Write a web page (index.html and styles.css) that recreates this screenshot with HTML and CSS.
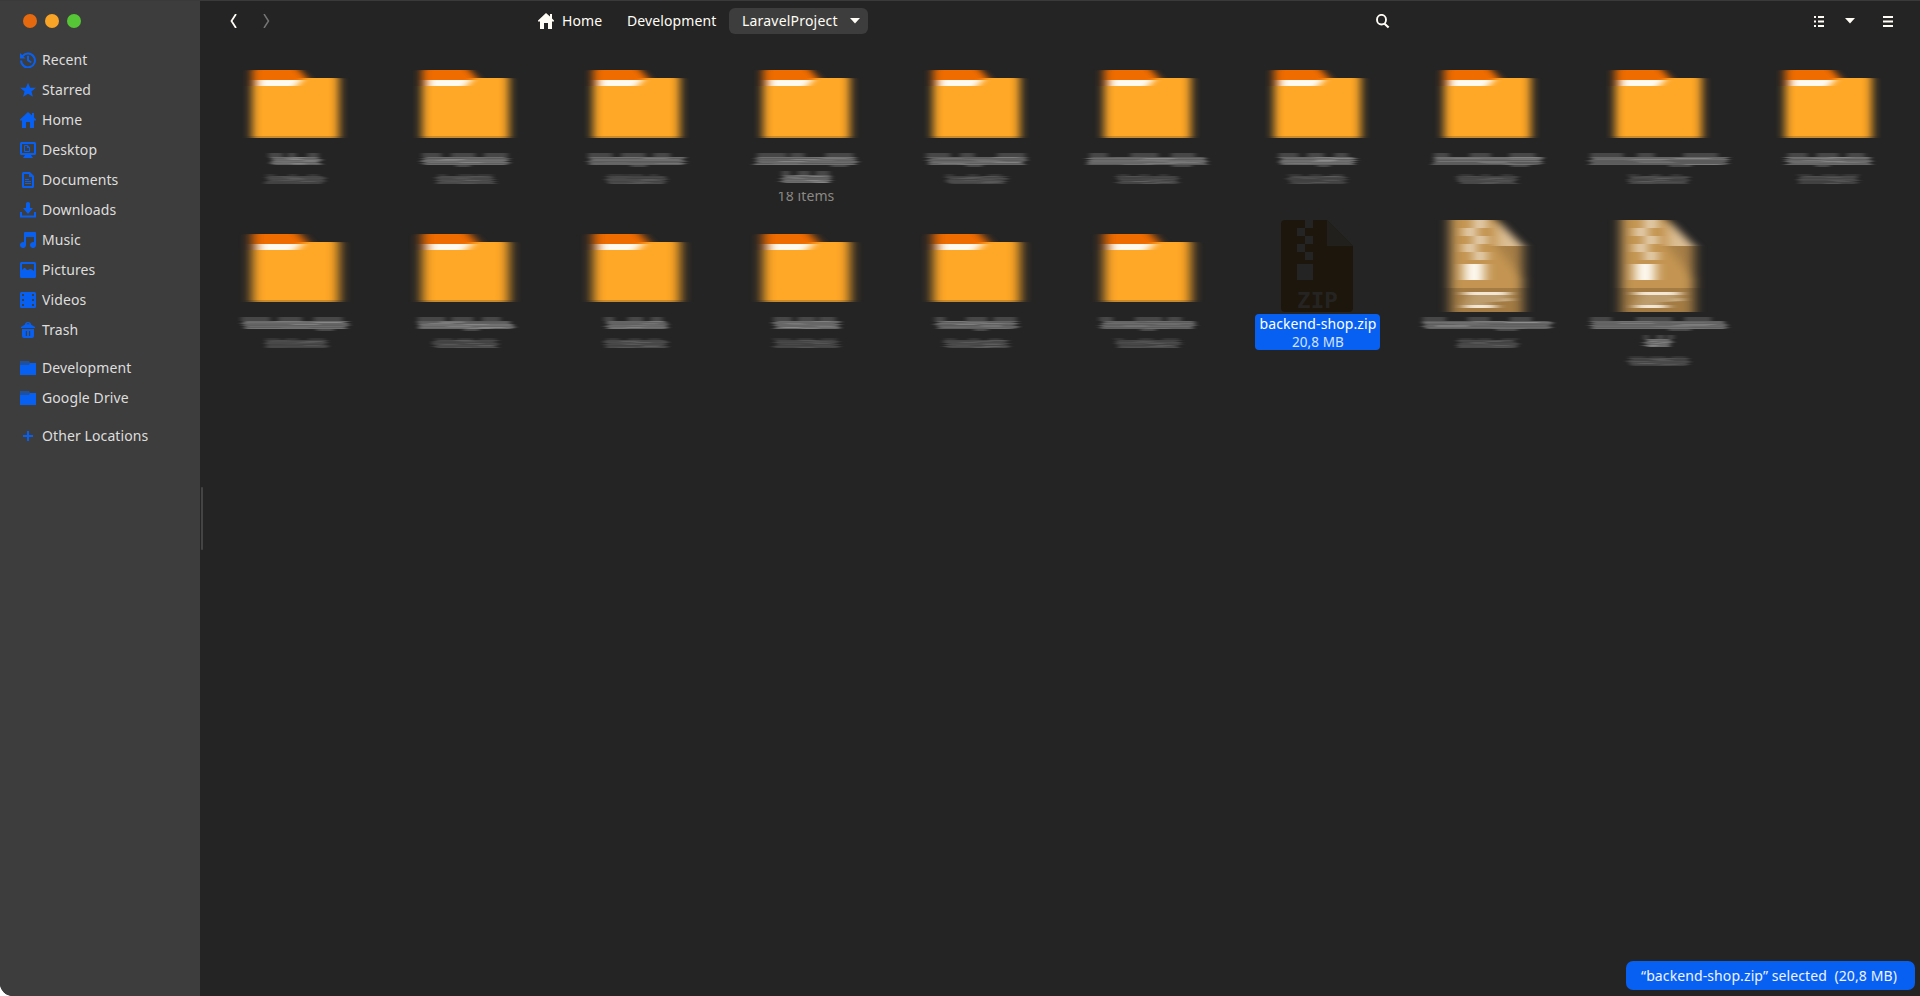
FILE: index.html
```html
<!DOCTYPE html>
<html lang="en">
<head>
<meta charset="utf-8">
<title>LaravelProject</title>
<link rel="stylesheet" href="styles.css">
</head>
<body>
<div class="window">
  <aside class="sidebar">
    <div class="controls"><i class="dot close"></i><i class="dot min"></i><i class="dot max"></i></div>
    <nav class="places">
      <a class="place"><svg viewBox="0 0 16 16"><path d="M2.6 4.2A6.9 6.9 0 1 1 1.1 8.6" fill="none" stroke="currentColor" stroke-width="2"/><path d="M0 1v5.5h5.5z"/><path d="M8 3.7v4.6l3.3 2.2" fill="none" stroke="currentColor" stroke-width="2"/></svg><span>Recent</span></a>
      <a class="place"><svg viewBox="0 0 16 16"><path d="M8 .8l2.1 5h5.8l-4.5 3.6 1.6 5.4L8 11.700l-5 3.100 1.600-5.400L.1 5.800h5.800z"/></svg><span>Starred</span></a>
      <a class="place"><svg viewBox="0 0 16 16"><path d="M8 0L0 7.500V8.500h2V16h4v-6h4v6h4V8.500h2V7.500l-2-2V1h-2v2.600z"/></svg><span>Home</span></a>
      <a class="place"><svg viewBox="0 0 16 16"><path fill-rule="evenodd" d="M1.500 0h13A1.500 1.500 0 0 1 16 1.500v10a1.500 1.500 0 0 1-1.500 1.500H11l2 3H3l2-3H1.500A1.500 1.500 0 0 1 0 11.500v-10A1.500 1.500 0 0 1 1.500 0zM2 2v9h12V2z"/><path d="M4.500 3.500h3.200l1.800 1.800v4.200h-5z" fill="none" stroke="currentColor"/><path d="M7 3v3h3z"/></svg><span>Desktop</span></a>
      <a class="place"><svg viewBox="0 0 16 16"><path d="M3 1.500q0-.5.5-.5H9.500L13 4.500V14.500q0 .5-.5.5H3.500q-.5 0-.5-.5z" fill="none" stroke="currentColor" stroke-width="2"/><path d="M9 1v4h4zM5 7h4v1H5zM5 9h6v1H5zM5 11h6v1H5z"/></svg><span>Documents</span></a>
      <a class="place"><svg viewBox="0 0 16 16"><path d="M6 1.500a2 1.500 0 0 1 4 0V6h3L8 12 3 6h3zM0 10h2v3.500h12V10h2v5.500H0z"/></svg><span>Downloads</span></a>
      <a class="place"><svg viewBox="0 0 16 16"><path d="M4 1q0-1 1-1h10q1 0 1 1v12a3 3 0 1 1-2-2.800V5H6v8a3 3 0 1 1-2-2.800z"/></svg><span>Music</span></a>
      <a class="place"><svg viewBox="0 0 16 16"><path fill-rule="evenodd" d="M1.500 0h13A1.500 1.500 0 0 1 16 1.500v13a1.500 1.500 0 0 1-1.500 1.500h-13A1.500 1.500 0 0 1 0 14.500v-13A1.500 1.500 0 0 1 1.500 0zM2 2v6l2-2h1l2 2h1l2-1h1l3 2V2z"/></svg><span>Pictures</span></a>
      <a class="place"><svg viewBox="0 0 16 16"><path fill-rule="evenodd" d="M1.500 0h13A1.500 1.500 0 0 1 16 1.500v13a1.500 1.500 0 0 1-1.500 1.500h-13A1.500 1.500 0 0 1 0 14.500v-13A1.500 1.500 0 0 1 1.500 0zM2 2v2h2V2zm10 0v2h2V2zM2 7v2h2V7zm10 0v2h2V7zM2 12v2h2v-2zm10 0v2h2v-2z"/></svg><span>Videos</span></a>
      <a class="place"><svg viewBox="0 0 16 16"><path fill-rule="evenodd" d="M5 2.500Q5 0 8 0t3 2.500L15 5v1H1V5zM6.500 2.300h3Q9.300 1.300 8 1.300T6.500 2.300zM2 7h12v7q0 2-2 2H4q-2 0-2-2zM5.800 9v5H7V9zM9 9v5h1.200V9z"/></svg><span>Trash</span></a>
      <a class="place spaced"><svg viewBox="0 0 16 16"><path d="M0 1h9l1 2v2H0z" opacity=".55"/><path d="M0 5h9l1-2h6v12H0z"/></svg><span>Development</span></a>
      <a class="place"><svg viewBox="0 0 16 16"><path d="M0 1h9l1 2v2H0z" opacity=".55"/><path d="M0 5h9l1-2h6v12H0z"/></svg><span>Google Drive</span></a>
      <a class="place spaced"><svg viewBox="0 0 16 16"><path d="M7 3h2v4h4v2H9v4H7V9H3V7h4z"/></svg><span>Other Locations</span></a>
    </nav>
  </aside>
  <main class="content">
    <header class="toolbar">
      <div class="history">
        <svg width="8" height="14" viewBox="0 0 8 14"><path d="M6 0L1.500 7 6 14" fill="none" stroke="#fffdf5" stroke-width="1.800"/></svg>
        <svg width="8" height="14" viewBox="0 0 8 14"><path d="M1 0l4.500 7L1 14" fill="none" stroke="#747474" stroke-width="1.500"/></svg>
      </div>
      <div class="crumbs">
        <svg class="home" width="16" height="16" viewBox="0 0 16 16"><path d="M8 0L0 7.500V8.500h2V16h4v-6h4v6h4V8.500h2V7.500l-2-2V1h-2v2.600z"/></svg>
        <span class="crumb-home">Home</span>
        <span class="crumb-dev">Development</span>
        <button class="current"><span>LaravelProject</span><svg width="10" height="6" viewBox="0 0 10 6"><path d="M0 0h10L5 5.500z"/></svg></button>
      </div>
      <svg class="search" width="14" height="15" viewBox="0 0 14 15"><ellipse cx="5.500" cy="5.700" rx="4.500" ry="4.800" fill="none" stroke="#fffdf5" stroke-width="1.900"/><path d="M8.300 9.500l4.300 4" stroke="#fffdf5" stroke-width="2.200"/></svg>
      <div class="tools">
        <svg width="10" height="11" viewBox="0 0 10 11"><path d="M0 0h2v2H0zM4 0h6v2H4zM0 4.500h2v2H0zM4 4.500h6v2H4zM0 9h2v2H0zM4 9h6v2H4z"/></svg>
        <svg width="10" height="6" viewBox="0 0 10 6"><path d="M0 0h10L5 5.500z"/></svg>
        <svg width="10" height="11" viewBox="0 0 10 11"><path d="M0 0h10v2H0zM0 4.500h10v2H0zM0 9h10v2H0z"/></svg>
      </div>
    </header>
    <section class="files" id="files"></section>
    <div class="handle"></div>
    <div class="status">“backend-shop.zip” selected&nbsp; (20,8 MB)</div>
  </main>
</div>
<svg class="defs" width="0" height="0">
  <defs>
    <filter id="b4" x="-30%" y="0" width="160%" height="100%" color-interpolation-filters="sRGB"><feGaussianBlur stdDeviation="4.700 0"/></filter>
    <filter id="b5" x="-30%" y="0" width="160%" height="100%" color-interpolation-filters="sRGB"><feGaussianBlur stdDeviation="6 0"/></filter>
    <filter id="smear" filterUnits="userSpaceOnUse" x="0" y="0" width="170" height="16" color-interpolation-filters="sRGB"><feGaussianBlur stdDeviation="2.500 0"/></filter>
    <g id="folder">
      <path d="M42 12q0-2 2-2h46l8 9v10H42z" fill="#ef6c00"/>
      <path d="M42 26h43l9-8h33q2 0 2 2v57.500H42z" fill="#ffa726"/>
      <path d="M47 20h45l-6 6H47z" fill="#fffaf0"/>
      <path d="M42 76h87v2H42z" fill="#c98a2c"/>
    </g>
    <g id="zip">
      <path d="M48 0h47l26 26v66H48z" fill="#c49552"/>
      <path d="M95 0l26 26H95z" fill="#dcbf95"/>
      <path d="M95 26h26v34z" fill="#a67e46"/>
      <path d="M48 68h73v24H48z" fill="#a37b43"/>
      <path d="M73 0h10v8H73zM63 8h10v8H63zM73 16h10v8H73zM63 24h10v8H63zM73 32h10v8H73z" fill="#efe3d0"/>
      <path d="M62 44h20v16H62z" fill="#fffcf5"/>
      <path d="M62 72h45v3H62zM62 85h32v3H62zM92 78h16v3H92z" fill="#f2e6d4"/>
      <path d="M66 75h40v3l-4 4H88v3H61z" fill="#bd9d6d"/>
    </g>
  </defs>
</svg>
<script src="files.js"></script>
</body>
</html>
```

FILE: styles.css
```css
* { box-sizing: border-box; }
body { margin: 0; background: #fff; font-family: "Noto Sans", "Open Sans", sans-serif; font-size: 14px; letter-spacing: .1px; color: #dedede; }
svg { display: block; fill: currentColor; flex: none; }
.defs { position: absolute; }
.window { display: flex; width: 1920px; height: 996px; background: #242424; border-top: 1px solid #3a3a3a; border-bottom-left-radius: 13px; overflow: hidden; }
.sidebar { width: 200px; background: #3d3d3d; }
.controls { display: flex; gap: 8px; padding: 13px 0 0 23px; height: 44px; }
.dot { width: 14px; height: 14px; border-radius: 50%; }
.close { background: #e5690f; }
.min { background: #f9a426; }
.max { background: #56c636; }
.places { display: flex; flex-direction: column; }
.place { display: flex; align-items: center; gap: 6px; height: 30px; padding-left: 20px; white-space: nowrap; }
.place svg { width: 16px; height: 16px; color: #0860f2; }
.place span { padding-bottom: 2px; }
.spaced { margin-top: 8px; }
.content { position: relative; width: 1720px; }
.toolbar { display: flex; align-items: center; height: 40px; color: #fffdf5; }
.history { display: flex; gap: 25px; width: 338px; padding-left: 30px; }
.crumbs { display: flex; align-items: center; width: 834px; }
.crumbs span { padding-bottom: 2px; }
.crumb-home { margin-left: 8px; width: 65px; }
.crumb-dev { width: 102px; }
.current { display: flex; align-items: center; justify-content: space-between; width: 139px; height: 26px; padding: 0 8px 0 13px; border: 0; border-radius: 6px; background: #3d3d3d; color: inherit; font: inherit; letter-spacing: .2px; }
.search { margin-left: 4px; }
.tools { display: flex; align-items: center; margin-left: 424px; }
.tools svg { margin-right: 21px; }
.tools svg:nth-child(2) { margin-right: 28px; }
.files { display: grid; grid-template-columns: repeat(10, 170.330px); grid-auto-rows: 164px; padding: 15px 0 0 10px; }
.file { display: flex; flex-direction: column; align-items: center; width: 170px; }
.icon { height: 92px; overflow: visible; }
.smears { display: flex; flex-direction: column; padding-top: 5px; }
.smears svg { margin-bottom: 3px; }
.smears .sub { margin-top: 2px; }
.meta { position: relative; height: 19px; margin-top: -3px; line-height: 19px; color: #8b8985; }
.meta::before { content: ""; position: absolute; left: 0; top: 0; width: 100%; height: 6px; background: #242424; }
.selected { display: flex; flex-direction: column; align-items: center; width: 125px; height: 36px; margin: 2px 0 0 2px; border-radius: 4px; background: #0860f2; color: #fff; line-height: 19px; }
.selected small { font-size: 13.500px; line-height: 19px; color: #d5e3ff; }
.handle { position: absolute; left: 1px; top: 486px; width: 2px; height: 63px; border-radius: 1px; background: #444; }
.status { position: absolute; right: 5px; bottom: 6px; width: 289px; height: 29px; border-radius: 7px; background: #0860f2; color: #eef3ff; line-height: 29px; text-align: center; padding-right: 3px; white-space: nowrap; }
```

FILE: files.js
```js
// Redacted file entries: widths (px) of each smeared line under the icon.
const entries = [
  { w: [59], s: 68 }, { w: [95], s: 68 }, { w: [106], s: 69 },
  { w: [111, 60], meta: "18 items" }, { w: [107], s: 68 }, { w: [128], s: 70 },
  { w: [84], s: 68 }, { w: [118], s: 68 }, { w: [147], s: 68 }, { w: [93], s: 68 },
  { w: [114], s: 72 }, { w: [104], s: 72 }, { w: [70], s: 72 }, { w: [74], s: 73 },
  { w: [90], s: 72 }, { w: [103], s: 73 },
  { selected: true },
  { zip: true, w: [137], s: 68 }, { zip: true, w: [146, 37], s: 69 }
];

let seed = 7;
const rnd = () => (seed = (seed * 16807) % 2147483647) / 2147483647;

function smear(width, level, sub) {
  const x0 = 86 - width / 2 + 2, w = width - 5;
  let out = "";
  const rect = (x, y, rw, h, a) => { out += `<rect x="${x.toFixed(1)}" y="${y}" width="${rw.toFixed(1)}" height="${h}" fill="#fff" opacity="${a.toFixed(2)}"/>`; };
  for (let i = 0; i < 3; i++) rect(x0 + w * i / 3 + rnd() * 4, sub ? 1 : 0, w * (0.12 + rnd() * 0.16), sub ? 2 : 4, level * 0.38);
  const top = sub ? 3 : 4;
  for (let y = top; y < top + 8; y++) {
    const l = rnd() * 5, r = rnd() * 5;
    rect(x0 + l, y, w - l - r, 1, level * (0.6 + rnd() * 0.25));
    rect(x0 + w * (0.1 + rnd() * 0.6), y, w * 0.25, 1, level * rnd() * 0.5);
  }
  if (!sub && width > 75) rect(x0 + w * (0.35 + rnd() * 0.4), 12, w * 0.16, 2, level * 0.4);
  return `<svg class="${sub ? "sub" : "name"}" width="170" height="15" viewBox="0 0 170 15"><g filter="url(#smear)">${out}</g></svg>`;
}

function icon(e, row) {
  if (e.selected) {
    return `<svg class="icon" width="170" viewBox="1 0 170 92"><path fill-rule="evenodd" fill="#1d160c" d="M54 0h20v8h8V0h14l26 26v62q0 4-4 4H54q-4 0-4-4V4q0-4 4-4zM66 8v8h8V8zM74 16v8h8v-8zM66 24v8h8v-8zM74 32v8h8v-8zM66 44v16h16V44z"/><path fill="#22201d" d="M96 0l26 26H96z"/><text x="66" y="88" textLength="41" lengthAdjust="spacingAndGlyphs" font-family="DejaVu Sans Mono" font-weight="bold" font-size="21" fill="#252423">ZIP</text></svg>`;
  }
  return `<svg class="icon" width="170" viewBox="0 0 170 92"><g filter="url(#${row ? "b5" : "b4"})"><use href="#${e.zip ? "zip" : "folder"}" y="${e.zip ? 0 : 4}"/></g></svg>`;
}

document.getElementById("files").innerHTML = entries.map((e, i) => {
  const row = i > 9 ? 1 : 0;
  let label;
  if (e.selected) label = `<div class="selected"><span>backend-shop.zip</span><small>20,8 MB</small></div>`;
  else {
    label = `<div class="smears">${e.w.map(w => smear(w, 0.42)).join("")}${e.s ? smear(e.s, 0.22, true) : ""}</div>`;
    if (e.meta) label += `<div class="meta">${e.meta}</div>`;
  }
  return `<div class="file">${icon(e, row)}${label}</div>`;
}).join("");
```
